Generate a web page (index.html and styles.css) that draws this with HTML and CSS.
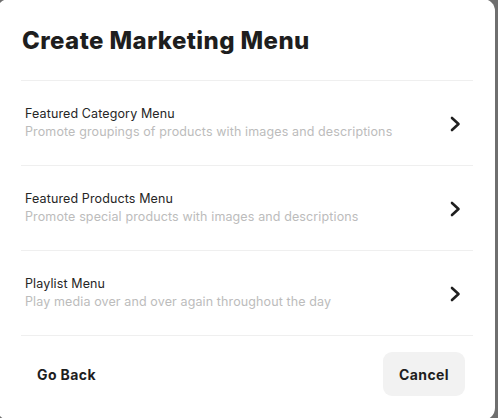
FILE: index.html
```html
<!DOCTYPE html>
<html>
<head>
<meta charset="utf-8">
<link rel="stylesheet" href="styles.css">
</head>
<body>
<div class="dialog">
  <div class="header">
    <h1 class="title">Create Marketing Menu</h1>
  </div>
  <ul class="options">
    <li class="option">
      <div class="option-text">
        <div class="option-name">Featured Category Menu</div>
        <div class="option-desc">Promote groupings of products with images and descriptions</div>
      </div>
      <svg class="chevron" width="12" height="18" viewBox="0 0 12 18"><path d="M3 3 L9.5 9 L3 15" fill="none" stroke="#1f1f1f" stroke-width="2.6" stroke-linecap="round" stroke-linejoin="round"/></svg>
    </li>
    <li class="option">
      <div class="option-text">
        <div class="option-name">Featured Products Menu</div>
        <div class="option-desc">Promote special products with images and descriptions</div>
      </div>
      <svg class="chevron" width="12" height="18" viewBox="0 0 12 18"><path d="M3 3 L9.5 9 L3 15" fill="none" stroke="#1f1f1f" stroke-width="2.6" stroke-linecap="round" stroke-linejoin="round"/></svg>
    </li>
    <li class="option">
      <div class="option-text">
        <div class="option-name">Playlist Menu</div>
        <div class="option-desc">Play media over and over again throughout the day</div>
      </div>
      <svg class="chevron" width="12" height="18" viewBox="0 0 12 18"><path d="M3 3 L9.5 9 L3 15" fill="none" stroke="#1f1f1f" stroke-width="2.6" stroke-linecap="round" stroke-linejoin="round"/></svg>
    </li>
  </ul>
  <div class="footer">
    <button class="btn btn-text">Go Back</button>
    <button class="btn btn-gray">Cancel</button>
  </div>
</div>
</body>
</html>
```
FILE: styles.css
```css
html, body {
  margin: 0;
  padding: 0;
  height: 100%;
  overflow: hidden;
  background: #6f6f6f;
  font-family: Inter, "Noto Sans", sans-serif;
}
.dialog {
  box-sizing: border-box;
  margin: -1px 0 0 -3px;
  width: 498px;
  height: 421px;
  background: #ffffff;
  border-radius: 12px;
  padding: 0 22px 0 24px;
  display: flex;
  flex-direction: column;
}
.header {
  padding: 28px 0 25px 1px;
  border-bottom: 1px solid #efefef;
}
.title {
  margin: 0;
  font-size: 24px;
  line-height: 28px;
  font-weight: 800;
  color: #1e1e1e;
  letter-spacing: 0.4px;
}
.options {
  list-style: none;
  margin: 0;
  padding: 0;
}
.option {
  height: 84px;
  border-bottom: 1px solid #efefef;
  display: flex;
  align-items: center;
  justify-content: space-between;
  padding: 0 12px 0 4px;
}
.option-text {
  display: flex;
  flex-direction: column;
}
.option-name {
  font-size: 12.5px;
  line-height: 18px;
  letter-spacing: 0.12px;
  color: #262626;
}
.option-desc {
  font-size: 12.5px;
  line-height: 18px;
  letter-spacing: 0.12px;
  color: #bcbcbc;
}
.chevron {
  display: block;
  margin-top: 2px;
}
.footer {
  display: flex;
  justify-content: space-between;
  align-items: center;
  padding: 16px 8px 0 0;
}
.btn {
  border: none;
  font-family: inherit;
  font-size: 14px;
  font-weight: 700;
  letter-spacing: 0.4px;
  color: #1e1e1e;
  height: 44px;
  padding: 0 16px;
  border-radius: 9px;
  background: transparent;
}
.btn-gray {
  background: #f2f2f2;
}
```
